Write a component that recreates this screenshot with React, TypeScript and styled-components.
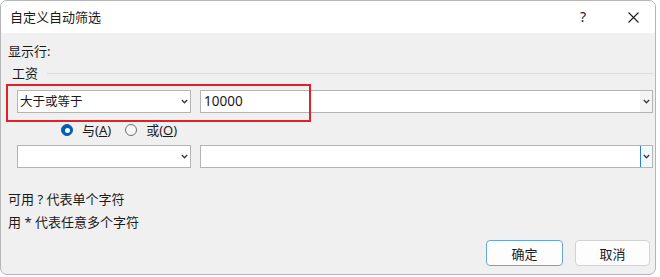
import React from "react";
import styled, { createGlobalStyle } from "styled-components";

const FONT = `"Noto Sans", "Noto Sans CJK SC", sans-serif`;

const GlobalStyle = createGlobalStyle`
  html, body {
    margin: 0;
    padding: 0;
    background: #ffffff;
  }
  body {
    font-family: ${FONT};
    color: #1a1a1a;
  }
`;

const Dialog = styled.div`
  width: 656px;
  height: 275px;
  box-sizing: border-box;
  border: 1px solid #b5b5b5;
  border-radius: 7px;
  overflow: hidden;
  background: #f0f0f0;
  display: flex;
  flex-direction: column;
`;

const TitleBar = styled.div`
  height: 32px;
  flex: none;
  background: #ffffff;
  display: flex;
  align-items: center;
  padding-left: 9px;
  font-size: 13px;
  line-height: 18px;
`;

const Title = styled.span`
  flex: 1;
`;

const TitleButton = styled.div<{ $w: number }>`
  width: ${(p) => p.$w}px;
  height: 32px;
  display: flex;
  align-items: center;
  justify-content: center;
  font-size: 14px;
`;

const Body = styled.div`
  flex: 1;
  display: flex;
  flex-direction: column;
  padding: 0 2px 0 7px;
  font-size: 13px;
`;

const Label = styled.div<{ $mt: number }>`
  line-height: 18px;
  margin-top: ${(p) => p.$mt}px;
  white-space: nowrap;
`;

const GroupHeader = styled.div`
  display: flex;
  align-items: center;
  gap: 9px;
  margin-top: 4px;
  padding-left: 4px;
  line-height: 18px;
`;

const GroupLine = styled.div`
  flex: 1;
  height: 1px;
  background: #dcdcdc;
`;

const FilterRow = styled.div<{ $mt: number }>`
  position: relative;
  display: flex;
  gap: 9px;
  margin-top: ${(p) => p.$mt}px;
  padding-left: 9px;
  height: 23px;
`;

const Combo = styled.div<{ $w?: number }>`
  box-sizing: border-box;
  height: 23px;
  ${(p) => (p.$w ? `width: ${p.$w}px;` : "flex: 1;")}
  border: 1px solid #b4b4b4;
  background: #ffffff;
  display: flex;
  align-items: stretch;
`;

const ComboText = styled.div<{ $pl: number; $fs: number }>`
  flex: 1;
  padding-left: ${(p) => p.$pl}px;
  font-size: ${(p) => p.$fs}px;
  line-height: 21px;
  white-space: nowrap;
`;

const ArrowBox = styled.div<{ $bg: string; $focus?: boolean }>`
  width: 11px;
  flex: none;
  display: flex;
  align-items: center;
  justify-content: center;
  background: ${(p) => p.$bg};
  border-left: 1px solid ${(p) => (p.$focus ? "#2f7fd0" : "transparent")};
`;

const Highlight = styled.div`
  position: absolute;
  left: -2px;
  top: -6px;
  width: 305px;
  height: 38px;
  box-sizing: border-box;
  border: 2px solid #e0202a;
  pointer-events: none;
`;

const RadioRow = styled.div`
  display: flex;
  align-items: center;
  margin-top: 8px;
  margin-left: 53px;
  height: 18px;
`;

const RadioOption = styled.label`
  display: flex;
  align-items: center;
  gap: 9px;
  margin-right: 14px;
  line-height: 18px;
  white-space: nowrap;
`;

const RadioDot = styled.span<{ $on?: boolean }>`
  width: 12px;
  height: 12px;
  box-sizing: border-box;
  border-radius: 50%;
  flex: none;
  display: flex;
  align-items: center;
  justify-content: center;
  background: ${(p) => (p.$on ? "#005fb8" : "#f7f7f7")};
  border: 1px solid ${(p) => (p.$on ? "#005fb8" : "#6e6e6e")};
  &::after {
    content: "";
    display: ${(p) => (p.$on ? "block" : "none")};
    width: 5px;
    height: 5px;
    border-radius: 50%;
    background: #ffffff;
  }
`;

const Key = styled.span`
  text-decoration: underline;
  text-underline-offset: 1px;
`;

const ButtonRow = styled.div`
  display: flex;
  justify-content: flex-end;
  gap: 12px;
  margin-top: 9px;
  padding-right: 3px;
`;

const Button = styled.div<{ $primary?: boolean; $w: number }>`
  width: ${(p) => p.$w}px;
  height: 26px;
  box-sizing: border-box;
  border-radius: 4px;
  background: #fdfdfd;
  border: 1px solid ${(p) => (p.$primary ? "#6aa5d8" : "#d2d2d2")};
  display: flex;
  align-items: center;
  justify-content: center;
  font-size: 13px;
`;

const Chevron = () => (
  <svg width="7" height="5" viewBox="0 0 7 5">
    <path d="M0.8 1 L3.5 3.8 L6.2 1" fill="none" stroke="#3a3a3a" strokeWidth="1.3" />
  </svg>
);

const CloseIcon = () => (
  <svg width="11" height="11" viewBox="0 0 11 11">
    <path d="M0.5 0.5 L10.5 10.5 M10.5 0.5 L0.5 10.5" stroke="#1f1f1f" strokeWidth="1.1" />
  </svg>
);

export default function App() {
  return (
    <>
      <GlobalStyle />
      <Dialog>
        <TitleBar>
          <Title>自定义自动筛选</Title>
          <TitleButton $w={20}>?</TitleButton>
          <TitleButton $w={30}></TitleButton>
          <TitleButton $w={20}>
            <CloseIcon />
          </TitleButton>
          <TitleButton $w={12}></TitleButton>
        </TitleBar>
        <Body>
          <Label $mt={9}>显示行:</Label>
          <GroupHeader>
            <span>工资</span>
            <GroupLine />
          </GroupHeader>
          <FilterRow $mt={8}>
            <Combo $w={174}>
              <ComboText $pl={2} $fs={12.5}>大于或等于</ComboText>
              <ArrowBox $bg="#ffffff">
                <Chevron />
              </ArrowBox>
            </Combo>
            <Combo>
              <ComboText $pl={3} $fs={13.5}>10000</ComboText>
              <ArrowBox $bg="#f4f4f4">
                <Chevron />
              </ArrowBox>
            </Combo>
            <Highlight />
          </FilterRow>
          <RadioRow>
            <RadioOption>
              <RadioDot $on />
              <span>
                与(<Key>A</Key>)
              </span>
            </RadioOption>
            <RadioOption>
              <RadioDot />
              <span>
                或(<Key>O</Key>)
              </span>
            </RadioOption>
          </RadioRow>
          <FilterRow $mt={6}>
            <Combo $w={174}>
              <ComboText $pl={2} $fs={12.5}></ComboText>
              <ArrowBox $bg="#ffffff">
                <Chevron />
              </ArrowBox>
            </Combo>
            <Combo>
              <ComboText $pl={3} $fs={13.5}></ComboText>
              <ArrowBox $bg="#f3f8fd" $focus>
                <Chevron />
              </ArrowBox>
            </Combo>
          </FilterRow>
          <Label $mt={22}>可用 ? 代表单个字符</Label>
          <Label $mt={5}>用 * 代表任意多个字符</Label>
          <ButtonRow>
            <Button $primary $w={77}>确定</Button>
            <Button $w={75}>取消</Button>
          </ButtonRow>
        </Body>
      </Dialog>
    </>
  );
}
